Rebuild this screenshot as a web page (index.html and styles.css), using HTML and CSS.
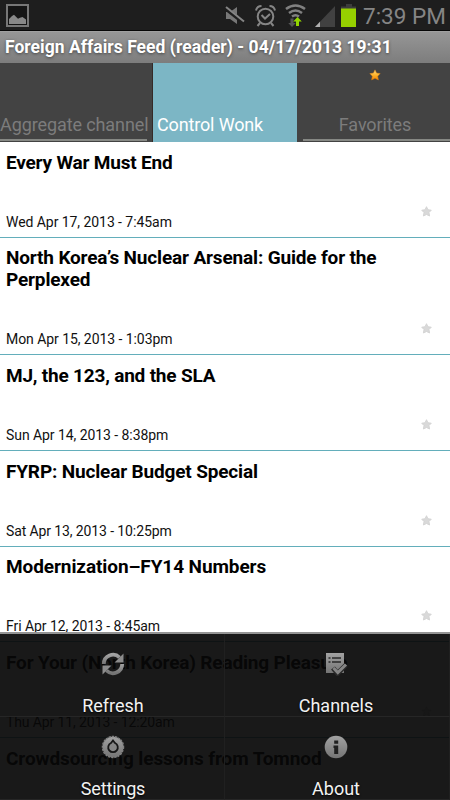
FILE: index.html
```html
<!DOCTYPE html>
<html lang="en">
<head>
<meta charset="utf-8">
<title>Foreign Affairs Feed</title>
<link rel="stylesheet" href="styles.css">
</head>
<body>
<svg class="defs" width="0" height="0" aria-hidden="true">
  <defs>
    <linearGradient id="silver" x1="0" y1="0" x2="0" y2="1"><stop offset="0" stop-color="#a2a2a2"/><stop offset="1" stop-color="#747474"/></linearGradient>
    <linearGradient id="gold" x1="0" y1="0" x2="0" y2="1"><stop offset="0" stop-color="#ffe08a"/><stop offset=".5" stop-color="#ffb52e"/><stop offset="1" stop-color="#f58300"/></linearGradient>
    <symbol id="star" viewBox="0 0 12 12"><path d="M6 .8 7.6 4.1 11.2 4.6 8.7 7.2 9.4 10.9 6 9.3 2.6 10.9 3.3 7.2.8 4.6 4.4 4.1Z" stroke-width="1" stroke-linejoin="round"/></symbol>
  </defs>
</svg>
<div class="screen">
  <header class="status">
    <svg class="picture" width="23" height="23" viewBox="0 0 23 23"><rect x="1" y="1" width="21" height="21" fill="#151515" stroke="#777" stroke-width="2"/><path d="M3 20v-5l3-3 2-1.200 4 4 2-1 2.500-.8 3.500 2.500V20Z" fill="#888"/></svg>
    <svg class="mute" width="20" height="20" viewBox="0 0 20 20"><path d="M1 6h4l7-5v17l-7-5H1Z" fill="#777"/><path d="M0 2 19 17" stroke="#1e1e1e" stroke-width="4"/><path d="M1 1 19 15.500" stroke="#858585" stroke-width="2"/></svg>
    <svg class="alarm" width="21" height="24" viewBox="0 0 21 24"><g fill="none" stroke="#858585" stroke-width="2"><circle cx="10.500" cy="12.500" r="7.800"/><path d="M1 6.500Q2 2 6.500 2M20 6.500Q19 2 14.500 2M5 19l-2.500 3M16 19l2.500 3M6.500 11l3.500 3.500 5-4.500"/></g></svg>
    <svg class="wifi" width="21" height="24" viewBox="0 0 21 24"><g fill="none" stroke="#808080" stroke-width="2.500"><path d="M1 5Q10.500-2 20 5M4 9q6.500-5 13 0M7 12.500q3.500-2.500 7 0"/></g><path d="M5.500 14.500h3V19h2.300L7 23 3.200 19h2.300Z" fill="#555"/><path d="M11 22h3v-4.500h2.800L12.500 13l-4.300 4.500H11Z" fill="#93d500"/></svg>
    <svg class="signal" width="20" height="21" viewBox="0 0 20 21"><path d="M20 0v21H0Z" fill="#414141"/><path d="M5 15.700V21H0Z" fill="#b0b0b0"/></svg>
    <svg class="battery" width="15" height="23" viewBox="0 0 15 23"><path d="M5 0h6v2.500h4V5H0V2.500h5Z" fill="#3c3c3c"/><path d="M0 4.500h15V23H0Z" fill="#96d000"/></svg>
    <span class="clock">7:39 PM</span>
  </header>
  <div class="titlebar"><h1>Foreign Affairs Feed (reader) - 04/17/2013 19:31</h1></div>
  <nav class="tabs">
    <div class="tab tab-first"><span>Aggregate channel</span></div>
    <div class="tab tab-active"><span>Control Wonk</span></div>
    <div class="tab tab-last"><svg class="fav" width="12" height="12" fill="url(#gold)" stroke="#d67a10" stroke-opacity=".5"><use href="#star"/></svg><span>Favorites</span></div>
  </nav>
  <main class="feed">
    <article class="row"><h2 class="tight">Every War Must End</h2><time>Wed Apr 17, 2013 - 7:45am</time><svg class="star"><use href="#star"/></svg></article>
    <article class="row row-tall"><h2>North Korea’s Nuclear Arsenal: Guide for the<br>Perplexed</h2><time>Mon Apr 15, 2013 - 1:03pm</time><svg class="star"><use href="#star"/></svg></article>
    <article class="row"><h2 class="tight">MJ, the 123, and the SLA</h2><time>Sun Apr 14, 2013 - 8:38pm</time><svg class="star"><use href="#star"/></svg></article>
    <article class="row"><h2>FYRP: Nuclear Budget Special</h2><time class="snug">Sat Apr 13, 2013 - 10:25pm</time><svg class="star"><use href="#star"/></svg></article>
    <article class="row"><h2 class="loose">Modernization–FY14 Numbers</h2><time>Fri Apr 12, 2013 - 8:45am</time><svg class="star"><use href="#star"/></svg></article>
    <article class="row"><h2>For Your (North Korea) Reading Pleasure</h2><time class="snug">Thu Apr 11, 2013 - 12:20am</time><svg class="star"><use href="#star"/></svg></article>
    <article class="row"><h2 class="loose">Crowdsourcing lessons from Tomnod</h2></article>
  </main>
  <div class="menu">
    <div class="item left"><svg width="24" height="24" viewBox="0 0 24 24"><g fill="none" stroke="url(#silver)" stroke-width="3.800"><path d="M2.800 12A9.200 9.200 0 0 1 18.500 5.500"/><path d="M21.200 12A9.200 9.200 0 0 1 5.500 18.500"/></g><path d="M22.500 1.500v9H13.500ZM1.500 22.500v-9h9Z" fill="#8c8c8c"/></svg><span>Refresh</span></div>
    <div class="item right"><svg width="24" height="24" viewBox="0 0 24 24"><path d="M2 1h18v20H2Z" fill="url(#silver)"/><path d="M4.500 6h2M8 6h9M4.500 10h2M8 10h9" stroke="#292929" stroke-width="1.500"/><path d="m9 16 4.500 5.500L22 13" fill="none" stroke="#292929" stroke-width="5"/><path d="m9.500 16 4.300 4.500L22 12.500" fill="none" stroke="#858585" stroke-width="3"/></svg><span>Channels</span></div>
    <div class="item left"><svg width="24" height="24" viewBox="0 0 24 24"><circle cx="12" cy="12" r="10.500" fill="url(#silver)"/><circle cx="12" cy="12" r="10.500" fill="none" stroke="#808080" stroke-width="1.500" stroke-dasharray="2.200 1"/><path d="M12 5.500 14 8a4.800 4.800 0 1 1-4 0Z" fill="#858585" stroke="#171717" stroke-width="1.800"/></svg><span class="tight">Settings</span></div>
    <div class="item right"><svg width="24" height="24" viewBox="0 0 24 24"><circle cx="12" cy="12" r="11.300" fill="url(#silver)"/><path d="M10.200 5.500h4v3.300h-4ZM9.500 10.500h4.700V19h-4v-6h-.7Z" fill="#202020"/></svg><span>About</span></div>
  </div>
</div>
</body>
</html>
```
FILE: styles.css
```css
* { box-sizing: border-box; }
body { margin: 0; font-family: Roboto, sans-serif; }
.defs { position: absolute; }
.screen { position: relative; width: 450px; height: 800px; overflow: hidden; background: #fff; display: flex; flex-direction: column; }

.status { flex: none; height: 31px; display: flex; align-items: flex-start; padding: 4px 5px 0 6px; background: #1e1e1e; border-bottom: 1px solid #060606; }
.status svg { flex: none; }
.mute { margin: 2px 0 0 196px; }
.alarm { margin-left: 10px; }
.wifi { margin-left: 9px; }
.signal { margin: 2px 0 0 9px; }
.battery { margin-left: 6px; }
.clock { margin-left: 7px; color: #858585; font-size: 22.5px; line-height: 25px; white-space: nowrap; }

.titlebar { flex: none; height: 32px; padding-left: 5px; background: linear-gradient(#969696, #7d7d7d); border-top: 1px solid #a0a0a0; }
h1 { margin: 0; color: #fff; font-size: 17.5px; line-height: 31px; font-weight: 700; letter-spacing: .02px; white-space: nowrap; text-shadow: 0 1px 3px #444; }

.tabs { flex: none; height: 79px; display: grid; grid-template-columns: 153px 144px 153px; background: #434343; }
.tab { display: flex; align-items: flex-end; color: #7c7c7c; font-size: 18px; line-height: 22px; letter-spacing: -.1px; padding-bottom: 6px; white-space: nowrap; }
.tab-first { border-right: 1px solid #352a28; background: linear-gradient(#868884, #868884) 0 76px / 147px 2px no-repeat; }
.tab-active { color: #fff; background: #7cb6c5; padding-left: 4px; letter-spacing: -.15px; }
.tab-last { flex-direction: column; align-items: center; justify-content: space-between; padding: 6px 0 6px 3px; background: linear-gradient(#868884, #868884) 6px 76px / 147px 2px no-repeat; }
.fav { display: block; }

.feed { flex: none; }
.row { position: relative; display: flex; flex-direction: column; justify-content: space-between; height: 95.7px; padding: 9.6px 6px 7px; border-bottom: 1px solid #63aebb; }
.row-tall { height: 117.7px; }
h2 { margin: 0; color: #000; font-size: 19px; line-height: 22px; font-weight: 700; letter-spacing: -.16px; white-space: nowrap; }
h2.tight { letter-spacing: -.2px; }
h2.loose { letter-spacing: -.09px; }
time { color: #111; font-size: 14px; line-height: 16px; letter-spacing: -.06px; white-space: nowrap; }
time.snug { letter-spacing: -.11px; }
.star { position: absolute; right: 18px; bottom: 20px; width: 11px; height: 11px; fill: #d9d9d9; stroke: #d2d2d2; }

.menu { position: absolute; left: 0; top: 632px; width: 450px; height: 168px; display: grid; grid-template-columns: 225px 225px; grid-template-rows: 83px 83px; background: rgba(8, 8, 8, .93); border-top: 2px solid #949494; }
.item { display: flex; flex-direction: column; align-items: center; padding-top: 18px; color: #f2f2f2; font-size: 18px; line-height: 22px; border-right: 1px solid #202020; border-bottom: 1px solid #262626; }
.left { padding-left: 2px; }
.right { padding-right: 2px; }
.item span { margin-top: 19px; text-shadow: 0 1px 2px #000; }
.item .tight { letter-spacing: -.15px; }
.item svg { flex: none; }
```
